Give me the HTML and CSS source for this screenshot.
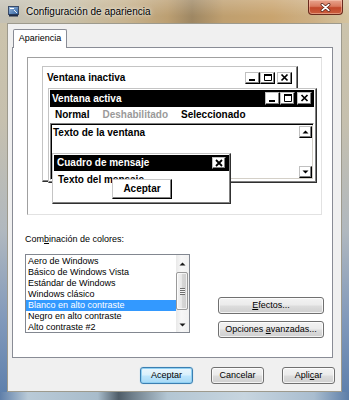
FILE: index.html
```html
<!DOCTYPE html>
<html lang="es">
<head>
<meta charset="utf-8">
<title>Configuración de apariencia</title>
<link rel="stylesheet" href="styles.css">
</head>
<body>
<div class="window">
  <div class="titlebar">
    <svg class="app-icon" width="11" height="11" viewBox="0 0 11 11">
      <defs>
        <linearGradient id="ig" x1="0" y1="0" x2="1" y2="1">
          <stop offset="0" stop-color="#9dbde0"/>
          <stop offset="1" stop-color="#2f5f9e"/>
        </linearGradient>
      </defs>
      <rect x="0.5" y="0.5" width="10" height="8" fill="url(#ig)" stroke="#3a4a66"/>
      <path d="M2 2.5h4" stroke="#fff" stroke-width="1"/>
      <rect x="1" y="8.5" width="9" height="2" fill="#1d2a46"/>
      <path d="M6 4l3 3" stroke="#e8eef6" stroke-width="1"/>
    </svg>
    <span class="title">Configuración de apariencia</span>
    <div class="close">
      <svg width="11" height="9" viewBox="0 0 11 9">
        <path d="M2.2 1.6l6.6 5.8M8.8 1.6l-6.6 5.8" stroke="#5a2418" stroke-width="3.2" stroke-linecap="round"/>
        <path d="M2.2 1.6l6.6 5.8M8.8 1.6l-6.6 5.8" stroke="#ffffff" stroke-width="1.7" stroke-linecap="round"/>
      </svg>
    </div>
  </div>

  <div class="client">
    <div class="tabs"><div class="tab">Apariencia</div></div>
    <div class="panel">
      <div class="preview">
        <div class="w inactive">
          <div class="caption light">
            <span class="ctext">Ventana inactiva</span>
            <div class="cbtns">
              <span class="cbtn"><svg width="13" height="10" viewBox="0 0 13 10"><rect x="3" y="6" width="6" height="2"/></svg></span>
              <span class="cbtn"><svg width="13" height="10" viewBox="0 0 13 10"><path d="M3.5 1.5h7v6h-7z" fill="none" stroke="#000"/><rect x="3" y="1" width="8" height="2"/></svg></span>
              <span class="cbtn gap"><svg width="13" height="10" viewBox="0 0 13 10"><path d="M3.5 1.5l6 6M9.5 1.5l-6 6" stroke="#000" stroke-width="1.7"/></svg></span>
            </div>
          </div>
        </div>

        <div class="w active">
          <div class="caption dark big">
            <span class="ctext">Ventana activa</span>
            <div class="cbtns">
              <span class="cbtn"><svg width="13" height="11" viewBox="0 0 13 11"><rect x="3" y="7" width="6" height="2"/></svg></span>
              <span class="cbtn"><svg width="13" height="11" viewBox="0 0 13 11"><path d="M3.5 1.5h7v7h-7z" fill="none" stroke="#000"/><rect x="3" y="1" width="8" height="2"/></svg></span>
              <span class="cbtn gap"><svg width="13" height="11" viewBox="0 0 13 11"><path d="M3.5 2l6 6M9.5 2l-6 6" stroke="#000" stroke-width="1.7"/></svg></span>
            </div>
          </div>
          <div class="menu">
            <span>Normal</span>
            <span class="dis">Deshabilitado</span>
            <span>Seleccionado</span>
          </div>
          <div class="wclient">
            <div class="wtext">Texto de la ventana</div>
            <div class="vscroll">
              <span class="sbtn"><svg width="11" height="10" viewBox="0 0 11 10"><path d="M2.5 6.5h6l-3-3z"/></svg></span>
              <span class="sbtn"><svg width="11" height="10" viewBox="0 0 11 10"><path d="M2.5 3.5h6l-3 3z"/></svg></span>
            </div>
          </div>
        </div>

        <div class="w msg">
          <div class="caption dark">
            <span class="ctext">Cuadro de mensaje</span>
            <span class="cbtn mclose"><svg width="12" height="10" viewBox="0 0 12 10"><path d="M3 2l6 6M9 2l-6 6" stroke="#000" stroke-width="1.8"/></svg></span>
          </div>
          <div class="mbody">
            <div class="mtext">Texto del mensaje</div>
            <div class="mbtn">Aceptar</div>
          </div>
        </div>
      </div>

      <div class="lower">
        <div class="schemes">
          <div class="label">Com<u>b</u>inación de colores:</div>
          <div class="listbox">
            <ul class="items">
              <li>Aero de Windows</li>
              <li>Básico de Windows Vista</li>
              <li>Estándar de Windows</li>
              <li>Windows clásico</li>
              <li class="sel">Blanco en alto contraste</li>
              <li>Negro en alto contraste</li>
              <li>Alto contraste #2</li>
            </ul>
            <div class="lscroll">
              <div class="sarrow up"><svg width="7" height="4" viewBox="0 0 7 4"><path d="M0.5 3.5h6l-3-3z" fill="#1a1a1a"/></svg></div>
              <div class="thumb"><span class="grip"></span></div>
              <div class="sarrow down"><svg width="7" height="4" viewBox="0 0 7 4"><path d="M0.5 0.5h6l-3 3z" fill="#1a1a1a"/></svg></div>
            </div>
          </div>
        </div>
        <div class="side-buttons">
          <button class="btn"><u>E</u>fectos...</button>
          <button class="btn">Opciones <u>a</u>vanzadas...</button>
        </div>
      </div>
    </div>

    <div class="footer">
      <button class="btn default">Aceptar</button>
      <button class="btn">Cancelar</button>
      <button class="btn">Apli<u>c</u>ar</button>
    </div>
  </div>
</div>
</body>
</html>
```

FILE: styles.css
```css
* { box-sizing: border-box; }

html, body {
  margin: 0;
  padding: 0;
}

body {
  width: 349px;
  height: 400px;
  overflow: hidden;
  font-family: "Liberation Sans", Arial, sans-serif;
  font-size: 9px;
  color: #000;
}

/* ---------- glass window frame ---------- */
.window {
  width: 349px;
  height: 400px;
  display: flex;
  flex-direction: column;
  background:
    linear-gradient(to right, #5f7fa9 0%, #b9cad7 8%, #a8bccb 28%, #4f5d68 34%, #6f7f8b 38%, #b3c6d3 48%, #c7d5df 70%, #a9bdcf 90%, #5d7ea8 100%) left bottom / 100% 8px no-repeat,
    linear-gradient(to bottom, #cdc4ab 0%, #c6c0ae 30%, #b0b8bf 58%, #8199bb 80%, #5b7eab 100%);
}

.titlebar {
  height: 23px;
  flex: none;
  display: flex;
  align-items: flex-start;
  background:
    linear-gradient(to bottom, rgba(255,255,255,0.2), rgba(255,255,255,0) 70%),
    linear-gradient(to right, #c4c1b5 0%, #c8c1ab 18%, #c7b38f 36%, #bc9f72 48%, #9e8763 55%, #bf9f6f 64%, #c9a46f 78%, #cdb085 90%, #d4c4a0 100%);
}

.app-icon {
  margin: 6px 0 0 8px;
  flex: none;
}

.title {
  margin: 6px 0 0 7px;
  font-size: 10px;
  line-height: 12px;
  color: #000;
  text-shadow: 0 0 5px rgba(255,255,255,0.85), 0 0 2px rgba(255,255,255,0.7);
}

.close {
  margin-left: auto;
  margin-right: 6px;
  width: 35px;
  height: 15px;
  border: 1px solid #6a2a1d;
  border-top: 0;
  border-radius: 0 0 4px 4px;
  background: linear-gradient(to bottom, #e8a48e 0%, #d9795e 45%, #c2472a 55%, #cc5f3f 100%);
  box-shadow: inset 0 0 0 1px rgba(255,214,196,0.45);
  display: flex;
  align-items: center;
  justify-content: center;
}

/* ---------- client area ---------- */
.client {
  flex: 1;
  margin: 0 7px 8px 7px;
  border: 1px solid #9d9a8d;
  background: #f0f0f0;
  padding: 5px 0 0 4px;
  display: flex;
  flex-direction: column;
}

.tabs {
  display: flex;
  height: 18px;
  padding-left: 1px;
  position: relative;
  z-index: 1;
}

.tab {
  width: 54px;
  height: 19px;
  border: 1px solid #898c95;
  border-bottom: 0;
  border-radius: 2px 2px 0 0;
  background: #fff;
  text-align: center;
  line-height: 17px;
}

.panel {
  width: 321px;
  height: 311px;
  border: 1px solid #898c95;
  background: #fff;
  padding: 9px 0 0 14px;
}

/* ---------- preview ---------- */
.preview {
  width: 295px;
  height: 158px;
  position: relative;
  overflow: hidden;
  background: #fff;
  border: 1px solid;
  border-color: #a0a0a0 #e2e2e2 #e2e2e2 #a0a0a0;
  font-size: 10px;
  font-weight: bold;
}

.w {
  position: absolute;
  background: #fff;
  border: 1px solid;
  border-color: #c4c4c4 #303030 #303030 #c4c4c4;
  box-shadow: inset -1px -1px 0 #808080;
}

.inactive {
  left: 14px;
  top: 8px;
  width: 256px;
  height: 116px;
  padding: 3px;
}

.active {
  left: 20px;
  top: 30px;
  width: 269px;
  height: 95px;
  padding: 1px 2px 2px 1px;
}

.msg {
  left: 24px;
  top: 95px;
  width: 179px;
  height: 51px;
  padding: 1px;
}

.caption {
  height: 16px;
  display: flex;
  align-items: center;
  padding-left: 1px;
  line-height: 12px;
  white-space: nowrap;
}

.caption.big { height: 17px; padding-left: 2px; }

.caption.light { background: #fff; color: #000; }
.caption.dark { background: #000; color: #fff; }
.msg .caption { padding-left: 3px; }

.cbtns {
  margin-left: auto;
  margin-right: 2px;
  display: flex;
}

.cbtn {
  width: 15px;
  height: 12px;
  background: #fff;
  border: 1px solid;
  border-color: #c0c0c0 #000 #000 #c0c0c0;
  box-shadow: inset -1px -1px 0 #808080;
  display: flex;
  align-items: center;
  justify-content: center;
}

.big .cbtn { height: 13px; }
.cbtn.gap { margin-left: 2px; }
.cbtn svg { fill: #000; }

.mclose {
  width: 14px;
  margin-left: auto;
  margin-right: 3px;
}

.menu {
  height: 16px;
  display: flex;
  align-items: center;
  gap: 13px;
  padding-left: 5px;
  line-height: 12px;
}

.menu .dis { color: #9a9a9a; }

.wclient {
  height: 57px;
  display: flex;
  border: 1px solid;
  border-color: #808080 #fff #fff #808080;
  box-shadow: inset 1px 1px 0 #000, inset -1px -1px 0 #d4d0c8;
  padding: 1px;
}

.wtext {
  flex: 1;
  padding: 2px 0 0 1px;
  line-height: 11px;
}

.vscroll {
  width: 13px;
  display: flex;
  flex-direction: column;
  justify-content: space-between;
  padding: 1px 0 0 0;
}

.sbtn {
  width: 13px;
  height: 12px;
  background: #fff;
  border: 1px solid;
  border-color: #c0c0c0 #000 #000 #c0c0c0;
  box-shadow: inset -1px -1px 0 #808080;
  display: flex;
  align-items: center;
  justify-content: center;
}

.sbtn svg { fill: #000; }

.mbody {
  position: relative;
  height: 31px;
  padding: 4px 0 0 4px;
  color: #000;
}

.mtext { line-height: 10px; }

.mbtn {
  position: absolute;
  left: 58px;
  top: 8px;
  width: 60px;
  height: 20px;
  background: #fff;
  border: 1px solid;
  border-color: #c8c8c8 #000 #000 #c8c8c8;
  box-shadow: inset -1px -1px 0 #808080;
  text-align: center;
  line-height: 18px;
}

/* ---------- lower section ---------- */
.lower {
  display: flex;
  margin-top: 19px;
  margin-left: -2px;
}

.schemes { width: 165px; }

.label {
  line-height: 11px;
  white-space: nowrap;
}

.listbox {
  margin-top: 9px;
  width: 165px;
  height: 79px;
  border: 1px solid #828790;
  display: flex;
  overflow: hidden;
  background: #fff;
}

.items {
  list-style: none;
  margin: 0;
  padding: 1px 0 0 0;
  flex: 1;
  overflow: hidden;
}

.items li {
  height: 11px;
  line-height: 11px;
  padding-left: 2px;
  white-space: nowrap;
}

.items li.sel {
  background: #3399ff;
  color: #fff;
}

.lscroll {
  width: 13px;
  display: flex;
  flex-direction: column;
  background: linear-gradient(to right, #e9e9e9, #f7f7f7 40%, #f1f1f1);
}

.sarrow {
  display: flex;
  align-items: center;
  justify-content: center;
}

.sarrow.up { height: 17px; padding-top: 1px; }
.sarrow.down { height: 15px; margin-top: auto; }

.thumb {
  height: 38px;
  width: 12px;
  border: 1px solid #9a9a9a;
  border-radius: 2px;
  background: linear-gradient(to right, #f4f4f4 0%, #e8e8e8 45%, #d6d6d6 55%, #cfcfcf 100%);
  box-shadow: inset 0 0 0 1px rgba(255,255,255,0.7);
  display: flex;
  align-items: center;
  justify-content: center;
}

.grip {
  width: 5px;
  height: 7px;
  background: repeating-linear-gradient(to bottom, #6e6e6e 0, #6e6e6e 1px, #f4f4f4 1px, #f4f4f4 2px);
}

.side-buttons {
  margin-left: 28px;
  padding-top: 63px;
  display: flex;
  flex-direction: column;
  gap: 7px;
}

.side-buttons .btn { width: 106px; }

/* ---------- buttons ---------- */
.btn {
  font-family: "Liberation Sans", Arial, sans-serif;
  font-size: 9px;
  color: #000;
  height: 17px;
  width: 53px;
  padding: 0;
  margin: 0;
  border: 1px solid #707070;
  border-radius: 3px;
  background: linear-gradient(to bottom, #f3f3f3 0%, #ebebeb 48%, #dddddd 52%, #cfcfcf 100%);
  box-shadow: inset 0 0 0 1px rgba(255,255,255,0.75);
  line-height: 15px;
  text-align: center;
  white-space: nowrap;
}

.btn.default {
  border-color: #3c7fb1;
  background: linear-gradient(to bottom, #eaf6fd 0%, #d9f0fc 48%, #bee6fd 52%, #a7d9f5 100%);
  box-shadow: inset 0 0 0 1px #8fd0f3, 0 0 1px #7fc3ec;
}

.footer {
  display: flex;
  justify-content: flex-end;
  gap: 18px;
  margin-top: 9px;
  padding-right: 6px;
}
```
